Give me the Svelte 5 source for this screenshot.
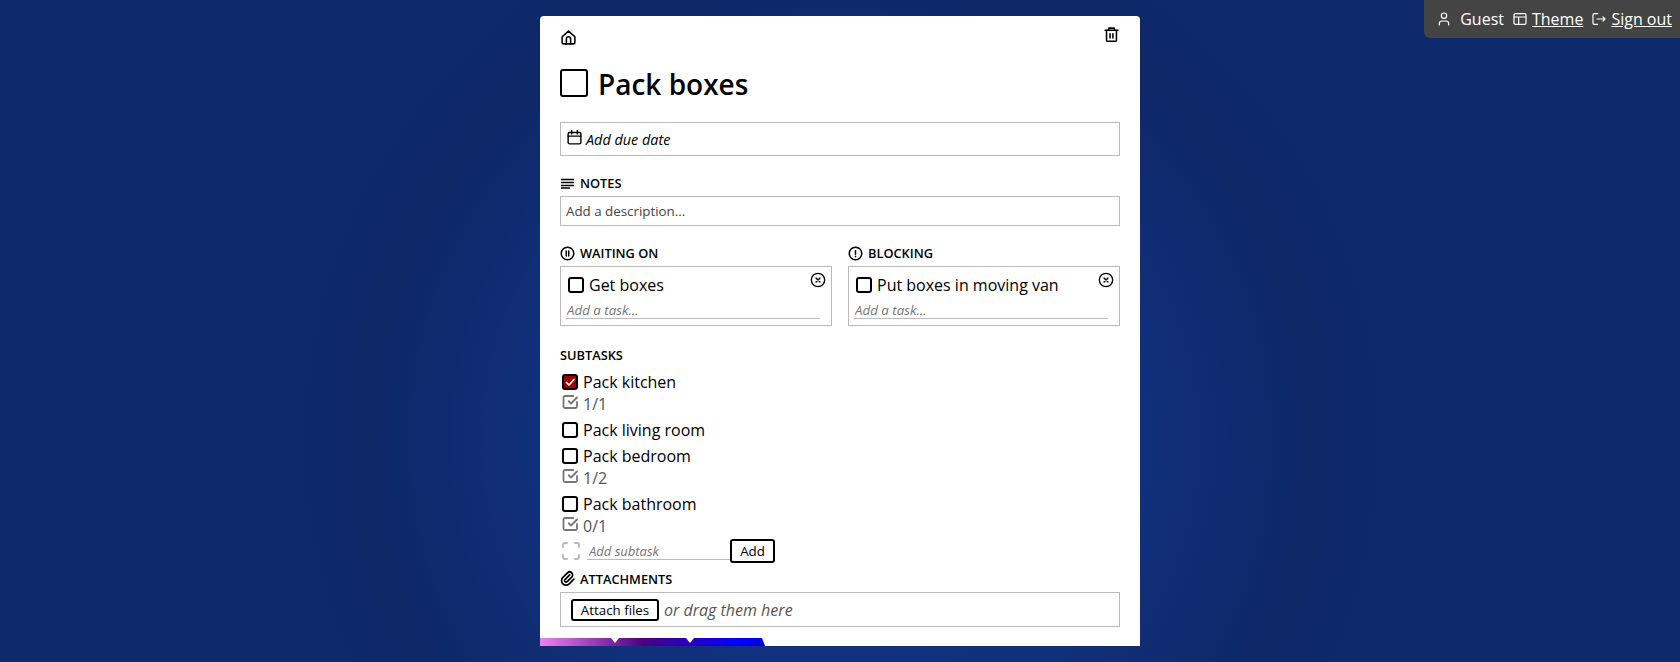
<script>
  const subtasks = [
    { title: 'Pack kitchen', done: true, count: '1/1' },
    { title: 'Pack living room', done: false, count: null },
    { title: 'Pack bedroom', done: false, count: '1/2' },
    { title: 'Pack bathroom', done: false, count: '0/1' }
  ];

  const relations = [
    { label: 'WAITING ON', icon: 'pause', task: 'Get boxes' },
    { label: 'BLOCKING', icon: 'alert', task: 'Put boxes in moving van' }
  ];
</script>

<div class="userbar">
  <svg class="ico" viewBox="0 0 24 24"><path d="M8 7a4 4 0 1 0 8 0a4 4 0 0 0 -8 0" /><path d="M5 21v-2a4 4 0 0 1 4 -4h6a4 4 0 0 1 4 4v2" /></svg>
  <span class="guest">Guest</span>
  <svg class="ico" viewBox="0 0 24 24"><rect x="3" y="4" width="18" height="16" rx="2" /><path d="M3 9h18M10 9v11" /></svg>
  <a href="#theme">Theme</a>
  <svg class="ico" viewBox="0 0 24 24"><path d="M10 4h-5a2 2 0 0 0 -2 2v12a2 2 0 0 0 2 2h5" /><path d="M9 12h12l-3 -3M18 15l3 -3" /></svg>
  <a href="#signout">Sign out</a>
</div>

<main class="card">
  <div class="toolbar">
    <svg class="home" viewBox="0 0 24 24"><path d="M3 11l9 -8l9 8v8a2 2 0 0 1 -2 2h-14a2 2 0 0 1 -2 -2z" /><path d="M9 21v-7a3 3 0 0 1 6 0v7" /></svg>
    <svg class="trash" viewBox="0 0 24 24"><path d="M3 6h18M8 6v-2a1 1 0 0 1 1 -1h6a1 1 0 0 1 1 1v2M5 6v14a1.500 1.500 0 0 0 1.500 1.500h11a1.500 1.500 0 0 0 1.500 -1.500v-14M10 11v6M14 11v6" /></svg>
  </div>

  <div class="title">
    <span class="box big"></span>
    <h1>Pack boxes</h1>
  </div>

  <div class="due">
    <svg class="cal" viewBox="0 0 24 24"><rect x="3" y="5" width="18" height="16" rx="2" /><path d="M3 10h18M8 2v5M16 2v5" /></svg>
    <em>Add due date</em>
  </div>

  <div class="label notes-label">
    <svg class="ico-label lines" viewBox="0 0 15 15"><path d="M1 3.500h13M1 6.500h13M1 9.500h13M1 12h9" /></svg>
    NOTES
  </div>
  <input class="notes" placeholder="Add a description..." />

  <div class="relations">
    {#each relations as rel}
      <section>
        <div class="label">
          <svg class="ico-label" viewBox="0 0 24 24">
            <circle cx="12" cy="12" r="10" />
            {#if rel.icon === 'pause'}
              <path d="M10 8v8M14 8v8" />
            {:else}
              <path d="M12 7v6M12 16.500v.5" />
            {/if}
          </svg>
          {rel.label}
        </div>
        <div class="rel-box">
          <div class="rel-task">
            <span class="box"></span>
            <span>{rel.task}</span>
            <svg class="remove" viewBox="0 0 24 24"><circle cx="12" cy="12" r="10" /><path d="M9 9l6 6M15 9l-6 6" /></svg>
          </div>
          <input class="task-input" placeholder="Add a task..." />
        </div>
      </section>
    {/each}
  </div>

  <div class="label subtasks-label">SUBTASKS</div>
  <ul class="subtasks">
    {#each subtasks as task}
      <li class:plain={!task.count}>
        <div class="sub-row">
          <span class="box" class:done={task.done}>
            {#if task.done}
              <svg viewBox="0 0 24 24"><path d="M5 13l5 5l10 -11" /></svg>
            {/if}
          </span>
          <span>{task.title}</span>
        </div>
        {#if task.count}
          <div class="count">
            <svg viewBox="0 0 24 24"><path d="M9 11l3 3l8 -8" /><path d="M20 12v6a2 2 0 0 1 -2 2h-14a2 2 0 0 1 -2 -2v-12a2 2 0 0 1 2 -2h11" /></svg>
            <span>{task.count}</span>
          </div>
        {/if}
      </li>
    {/each}
  </ul>

  <div class="add-sub">
    <svg class="dashed" viewBox="0 0 18 18"><path d="M1 5v-2a2 2 0 0 1 2 -2h2M13 1h2a2 2 0 0 1 2 2v2M17 13v2a2 2 0 0 1 -2 2h-2M5 17h-2a2 2 0 0 1 -2 -2v-2" /></svg>
    <input placeholder="Add subtask" />
    <button>Add</button>
  </div>

  <div class="label attach-label">
    <svg class="ico-label clip" viewBox="0 0 24 24"><path d="M15 7l-6.500 6.500a1.500 1.500 0 0 0 3 3l6.500 -6.500a3 3 0 0 0 -6 -6l-6.500 6.500a4.500 4.500 0 0 0 9 9l6.500 -6.500" /></svg>
    ATTACHMENTS
  </div>
  <div class="attach">
    <button>Attach files</button>
    <em>or drag them here</em>
  </div>

  <div class="flag">
    <i class="notch one"></i>
    <i class="notch two"></i>
  </div>
</main>

<style>
  :global(body) {
    background: radial-gradient(circle 570px at 840px 440px, #133283 0, #11307b 300px, #0e2868 470px, #0f2a6c 570px), #0f2a6c;
    height: 662px;
    overflow: hidden;
    font-family: "Open Sans", sans-serif;
    color: #000;
  }

  svg {
    fill: none;
    stroke: currentColor;
    stroke-width: 2;
    stroke-linecap: round;
    stroke-linejoin: round;
    flex: none;
    display: block;
  }

  input {
    font-family: inherit;
    outline: none;
    background: transparent;
    box-sizing: border-box;
  }

  input::placeholder {
    color: #757575;
    opacity: 1;
  }

  .userbar {
    position: absolute;
    top: 0;
    right: 0;
    height: 38px;
    box-sizing: border-box;
    padding: 0 8px 0 12px;
    display: flex;
    align-items: center;
    background: #444;
    color: #fff;
    font-size: 16px;
    border-bottom-left-radius: 6px;
  }

  .userbar a {
    color: #fff;
    margin-left: 4px;
    margin-right: 8px;
  }

  .userbar a:last-child {
    margin-right: 0;
  }

  .userbar .ico {
    width: 16px;
    height: 16px;
    stroke-width: 1.800;
  }

  .guest {
    margin-left: 8px;
    margin-right: 8px;
  }

  .card {
    position: relative;
    width: 600px;
    height: 630px;
    margin: 16px auto 0;
    padding: 0 20px;
    box-sizing: border-box;
    background: #fff;
    border-radius: 4px 4px 0 0;
    overflow: hidden;
  }

  .toolbar {
    display: flex;
    justify-content: space-between;
    padding-top: 10px;
    height: 38px;
    box-sizing: border-box;
  }

  .home {
    width: 17px;
    height: 17px;
    margin-top: 3px;
    stroke-width: 2.200;
  }

  .trash {
    width: 17px;
    height: 17px;
    stroke-width: 2.200;
  }

  .title {
    display: flex;
    align-items: center;
    gap: 10px;
    margin-top: 15px;
    height: 28px;
  }

  h1 {
    margin: 2px 0 0;
    font-size: 28px;
    font-weight: 600;
    line-height: 28px;
  }

  .box {
    width: 16px;
    height: 16px;
    box-sizing: border-box;
    border: 2px solid #000;
    border-radius: 3px;
    flex: none;
    display: block;
  }

  .box.big {
    width: 28px;
    height: 28px;
  }

  .box.done {
    background: #a00000;
    color: #fff;
  }

  .box.done svg {
    width: 12px;
    height: 12px;
    stroke-width: 3.500;
  }

  .due {
    margin-top: 25px;
    height: 34px;
    box-sizing: border-box;
    border: 1px solid #bbb;
    display: flex;
    align-items: center;
    gap: 3px;
    padding-left: 5px;
    font-size: 14.400px;
  }

  .cal {
    width: 17px;
    height: 17px;
    margin-top: -4px;
    stroke-width: 2;
  }

  .label {
    display: flex;
    align-items: center;
    gap: 5px;
    font-size: 12.800px;
    font-weight: 600;
    line-height: 16px;
  }

  .ico-label {
    width: 15px;
    height: 15px;
    stroke-width: 2.400;
  }

  .lines {
    stroke-width: 1.500;
    stroke-linecap: butt;
  }

  .notes-label {
    margin-top: 19px;
  }

  .notes {
    display: block;
    width: 100%;
    height: 30px;
    margin-top: 5px;
    border: 1px solid #bbb;
    padding: 0 5px;
    font-size: 13.330px;
  }

  .notes::placeholder {
    color: #444;
  }

  .relations {
    display: grid;
    grid-template-columns: 1fr 1fr;
    gap: 16px;
    margin-top: 19px;
  }

  .rel-box {
    margin-top: 5px;
    height: 60px;
    box-sizing: border-box;
    border: 1px solid #bbb;
    padding: 10px 5px 0;
    position: relative;
  }

  .rel-task {
    display: flex;
    align-items: center;
    gap: 5px;
    font-size: 16px;
    line-height: 16px;
    height: 16px;
    padding-left: 2px;
  }

  .remove {
    position: absolute;
    top: 5px;
    right: 5px;
    width: 16px;
    height: 16px;
  }

  .task-input {
    display: block;
    width: 254px;
    height: 20px;
    margin-top: 6px;
    padding: 3px 1px 0;
    border: 0;
    border-bottom: 1px solid #bbb;
    font-size: 13.330px;
    font-style: italic;
  }

  .subtasks-label {
    margin-top: 21px;
  }

  .subtasks {
    list-style: none;
    margin: 11px 0 0;
    padding: 0 0 0 2px;
  }

  .subtasks li {
    margin-bottom: 8px;
  }

  .subtasks li.plain {
    margin-bottom: 10px;
  }

  .sub-row {
    display: flex;
    align-items: center;
    gap: 5px;
    font-size: 16px;
    line-height: 16px;
    height: 16px;
  }

  .count {
    display: flex;
    align-items: center;
    gap: 3px;
    margin-top: 4px;
    height: 20px;
    color: #555;
    font-size: 16px;
    line-height: 20px;
  }

  .count svg {
    width: 18px;
    height: 18px;
    margin-top: -5px;
    stroke: #777;
    stroke-width: 2.400;
  }

  .add-sub {
    display: flex;
    align-items: flex-end;
    margin-top: -5px;
    padding-left: 2px;
    height: 24px;
  }

  .dashed {
    width: 18px;
    height: 18px;
    stroke: #bbb;
    stroke-width: 2;
    margin: 0 7px 3px 0;
  }

  .add-sub input {
    width: 143px;
    height: 22px;
    margin-bottom: 3px;
    padding: 5px 2px 0;
    border: 0;
    border-bottom: 1px solid #bbb;
    font-size: 13px;
    font-style: italic;
  }

  button {
    font-family: inherit;
    font-size: 13.330px;
    color: #000;
    background: #fff;
    border: 2px solid #000;
    border-radius: 3px;
    padding: 0;
    box-sizing: border-box;
  }

  .add-sub button {
    width: 45px;
    height: 24px;
  }

  .attach-label {
    margin-top: 7px;
  }

  .clip {
    width: 17px;
    height: 17px;
    margin: 0 -1px;
  }

  .attach {
    margin-top: 5px;
    height: 35px;
    box-sizing: border-box;
    border: 1px solid #bbb;
    display: flex;
    align-items: center;
    padding-left: 10px;
    gap: 5px;
  }

  .attach button {
    width: 88px;
    height: 22px;
  }

  .attach em {
    font-size: 16px;
    color: #555;
  }

  .flag {
    position: absolute;
    left: 0;
    bottom: 0;
    width: 225px;
    height: 8px;
    background: linear-gradient(90deg, #ee82ee 0, #4b0082 103px, #0000ff 200px, #0000cd 225px);
    clip-path: polygon(0 0, 222px 0, 225px 8px, 0 8px);
  }

  .notch {
    position: absolute;
    top: 0;
    width: 0;
    height: 0;
    border-left: 4px solid transparent;
    border-right: 4px solid transparent;
    border-top: 5px solid #fff;
  }

  .notch.one {
    left: 71px;
  }

  .notch.two {
    left: 146px;
  }
</style>
